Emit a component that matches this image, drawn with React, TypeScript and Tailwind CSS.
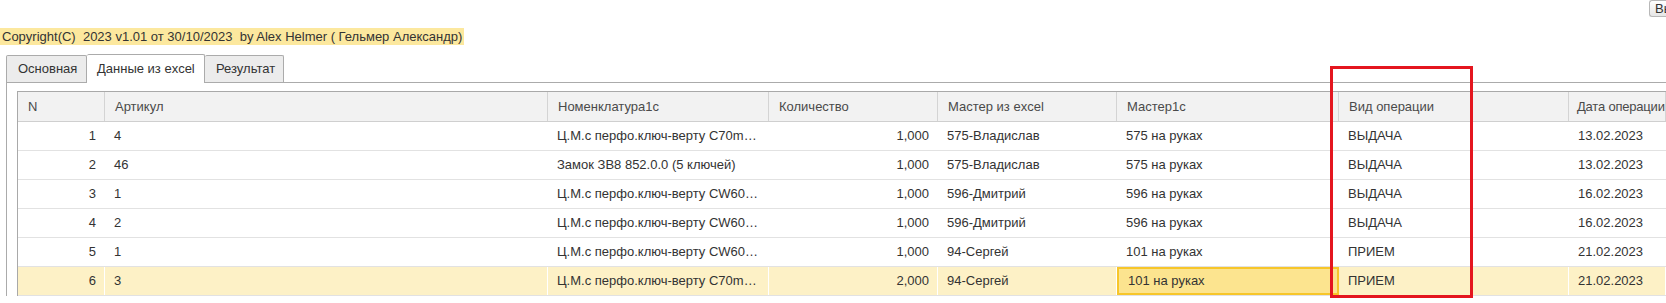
import React from "react"

type Col = { title: string; right?: boolean }

const cols: Col[] = [
    { title: "N", right: true },
    { title: "Артикул" },
    { title: "Номенклатура1с" },
    { title: "Количество", right: true },
    { title: "Мастер из excel" },
    { title: "Мастер1с" },
    { title: "Вид операции" },
    { title: "Дата операции" },
]

const rows: string[][] = [
    ["1", "4", "Ц.М.с перфо.ключ-верту C70m…", "1,000", "575-Владислав", "575 на руках", "ВЫДАЧА", "13.02.2023"],
    ["2", "46", "Замок ЗВ8 852.0.0 (5 ключей)", "1,000", "575-Владислав", "575 на руках", "ВЫДАЧА", "13.02.2023"],
    ["3", "1", "Ц.М.с перфо.ключ-верту CW60…", "1,000", "596-Дмитрий", "596 на руках", "ВЫДАЧА", "16.02.2023"],
    ["4", "2", "Ц.М.с перфо.ключ-верту CW60…", "1,000", "596-Дмитрий", "596 на руках", "ВЫДАЧА", "16.02.2023"],
    ["5", "1", "Ц.М.с перфо.ключ-верту CW60…", "1,000", "94-Сергей", "101 на руках", "ПРИЕМ", "21.02.2023"],
    ["6", "3", "Ц.М.с перфо.ключ-верту C70m…", "2,000", "94-Сергей", "101 на руках", "ПРИЕМ", "21.02.2023"],
]

const gridCols = "grid grid-cols-[87px_443px_221px_169px_179px_222px_230px_1fr]"

const Tabs = () => {
    return (
        <div className="flex items-end h-[28px] pl-[6px]">
            <div className="h-[27px] w-[81px] flex items-center pl-[11px] bg-[#ececec] border border-b-0 border-[#ababab] rounded-t-[2px] text-[#333]">
                Основная
            </div>
            <div className="relative z-10 -mb-px h-[29px] w-[118px] flex items-center pl-[10px] bg-white border border-b-0 border-[#ababab] border-l-0 rounded-t-[2px] text-[#333]">
                Данные из excel
            </div>
            <div className="h-[27px] w-[79px] flex items-center pl-[11px] bg-[#ececec] border border-b-0 border-l-0 border-[#ababab] rounded-t-[2px] text-[#333]">
                Результат
            </div>
        </div>
    )
}

const Table = () => {
    return (
        <div className="border-t border-l border-[#a9a9a9]">
            <div className={gridCols + " h-[30px] bg-[#f2f2f2] border-b border-[#cfcfcf] text-[#4a4a4a]"}>
                {cols.map((c, i) => (
                    <div
                        key={i}
                        className={
                            "flex items-center border-r border-[#d4d4d4] whitespace-nowrap overflow-hidden " +
                            (i === cols.length - 1 ? "pl-[8px] tracking-[-0.2px]" : "pl-[10px]")
                        }
                    >
                        {c.title}
                    </div>
                ))}
            </div>
            {rows.map((r, ri) => {
                const sel = ri === rows.length - 1
                return (
                    <div key={ri} className={gridCols + " h-[29px] border-b border-[#e2e2e2] text-[#333] " + (sel ? "bg-[#fdf1c6]" : "bg-white")}>
                        {r.map((v, ci) => {
                            const focused = sel && ci === 5
                            return (
                                <div
                                    key={ci}
                                    className={
                                        "flex items-center whitespace-nowrap overflow-hidden " +
                                        (cols[ci].right ? "justify-end pr-[8px] " : "pl-[9px] ") +
                                        (focused ? "bg-[#fce48f] border-2 border-[#f7c62a] pl-[7px]" : "border-r border-white")
                                    }
                                >
                                    {v}
                                </div>
                            )
                        })}
                    </div>
                )
            })}
        </div>
    )
}

export default function App() {
    return (
        <div className="relative w-[1666px] h-[303px] overflow-hidden bg-white text-[13px] font-['Liberation_Sans',Arial,sans-serif]">
            <div className="flex justify-end h-[28px]">
                <div className="w-[17px] h-[17px] border border-r-0 border-[#b8b8b8] rounded-l-[3px] bg-gradient-to-b from-white to-[#e6e6e6] overflow-hidden pl-[5px] leading-[16px] text-[#333]">
                    Выполнить
                </div>
            </div>
            <div className="h-[17px] flex">
                <span className="bg-[#fce89e] px-[2px] leading-[17px] text-[#333] whitespace-nowrap">
                    Copyright(C)&nbsp; 2023 v1.01 от 30/10/2023&nbsp; by Alex Helmer ( Гельмер Александр)
                </span>
            </div>
            <div className="h-[9px]" />
            <Tabs />
            <div className="ml-[6px] border-t border-l border-[#ababab] pl-[10px] pt-[8px]">
                <Table />
            </div>
            {/* red annotation frame */}
            <div className="absolute left-[1330px] top-[66px] w-[143px] h-[232px] border-[3px] border-[#e4161f]" />
        </div>
    )
}
